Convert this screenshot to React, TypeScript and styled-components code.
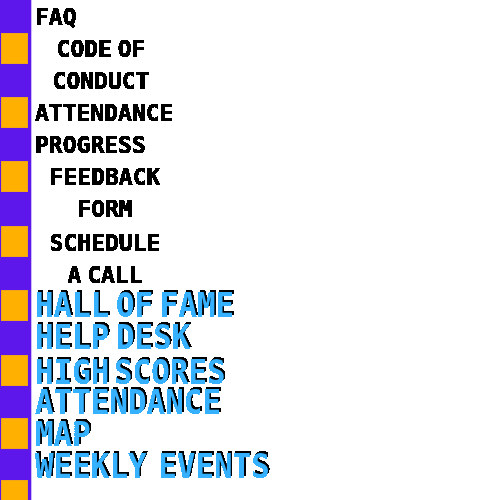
import React from 'react';
import styled, { createGlobalStyle } from 'styled-components';

const GlobalStyle = createGlobalStyle`
  html, body {
    margin: 0;
    padding: 0;
    background: #fff;
  }
`;

const Page = styled.div`
  display: flex;
  width: 500px;
  height: 500px;
  overflow: hidden;
`;

const Rail = styled.div`
  display: flex;
  flex-direction: column;
  flex: none;
  width: 30px;
  padding-left: 1px;
  background: #5e17eb;
  border-right: 1px solid #cdb8f8;
`;

const Tile = styled.div<{ $gap: number }>`
  flex: none;
  width: 27px;
  height: 31px;
  margin-top: ${(p) => p.$gap}px;
  background: #ffb000;
  box-shadow: inset 0 0 0 1px #f0a418;
`;

const Content = styled.div`
  display: flex;
  flex-direction: column;
  align-items: flex-start;
  padding: 1px 0 0 3px;
  filter: url(#crisp);
`;

const TextLink = styled.a<{ $nudge?: number; $width?: number }>`
  display: block;
  width: ${(p) => (p.$width ? `${p.$width}px` : 'auto')};
  margin-top: ${(p) => p.$nudge ?? 0}px;
  font-family: 'DejaVu Sans Mono', monospace;
  font-weight: 700;
  font-size: 23px;
  line-height: 32px;
  word-spacing: -8px;
  text-align: center;
  color: #000;
  -webkit-text-stroke: 0.5px #000;
`;

const ArcadeLink = styled.a<{ $nudge?: number; $space?: number }>`
  display: block;
  margin-top: ${(p) => p.$nudge ?? 0}px;
  font-family: 'DejaVu Sans Mono', monospace;
  font-weight: 700;
  font-size: 30.9px;
  line-height: 32px;
  word-spacing: ${(p) => p.$space ?? -12}px;
  white-space: nowrap;
  color: #36b1ff;
  text-shadow: 1.5px -1.5px 0 #000;
  transform: scaleY(1.1);
`;

const tileGaps = [33, 33, 33, 33.5, 33.5, 34, 31.5, 31.5];

const menu = [
  { lines: ['FAQ'] },
  { lines: ['CODE OF', 'CONDUCT'], width: 132 },
  { lines: ['ATTENDANCE'] },
  { lines: ['PROGRESS'] },
  { lines: ['FEEDBACK', 'FORM'], width: 140 },
  { lines: ['SCHEDULE', 'A CALL'], width: 140, nudge: 2 },
];

const arcade = [
  { label: 'HALL OF FAME', nudge: -2 },
  { label: 'HELP DESK' },
  { label: 'HIGH SCORES', nudge: 3, space: -14 },
  { label: 'ATTENDANCE', nudge: -2 },
  { label: 'MAP' },
  { label: 'WEEKLY EVENTS', space: -7 },
];

const App: React.FC = () => (
  <Page>
    <GlobalStyle />
    <svg width="0" height="0" style={{ position: 'absolute' }}>
      <filter id="crisp" x="0" y="0" width="100%" height="100%">
        <feComponentTransfer>
          <feFuncA type="discrete" tableValues="0 1 1" />
        </feComponentTransfer>
      </filter>
    </svg>
    <Rail>
      {tileGaps.map((gap, i) => (
        <Tile key={i} $gap={gap} />
      ))}
    </Rail>
    <Content>
      {menu.map((item) => (
        <TextLink key={item.lines[0]} $nudge={item.nudge} $width={item.width}>
          {item.lines.map((line, i) => (
            <React.Fragment key={line}>
              {i > 0 && <br />}
              {line}
            </React.Fragment>
          ))}
        </TextLink>
      ))}
      {arcade.map((item) => (
        <ArcadeLink key={item.label} $nudge={item.nudge} $space={item.space}>
          {item.label}
        </ArcadeLink>
      ))}
    </Content>
  </Page>
);

export default App;
